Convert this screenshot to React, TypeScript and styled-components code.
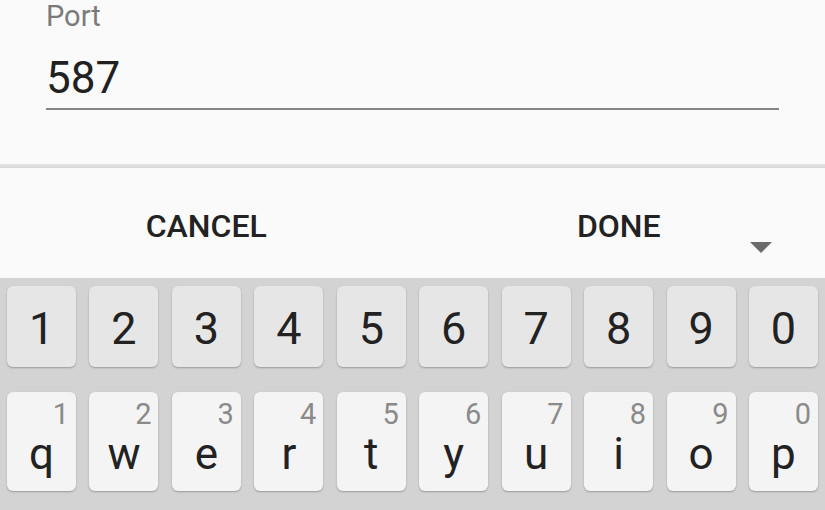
import React from "react";
import styled, { createGlobalStyle } from "styled-components";

const GlobalStyle = createGlobalStyle`
  html, body {
    margin: 0;
    padding: 0;
    background: #fafafa;
  }
  body {
    font-family: Roboto, "Noto Sans", sans-serif;
  }
`;

const Screen = styled.div`
  width: 825px;
  height: 510px;
  display: flex;
  flex-direction: column;
  overflow: hidden;
  background: #fafafa;
`;

const FieldArea = styled.div`
  height: 164px;
  padding: 1px 46px 0 46px;
  box-sizing: border-box;
  display: flex;
  flex-direction: column;
`;

const Label = styled.div`
  font-size: 29px;
  line-height: 30px;
  color: #7a7a7a;
`;

const Input = styled.div`
  margin-top: 21px;
  font-size: 44px;
  line-height: 52px;
  color: #212121;
  padding-bottom: 4px;
  border-bottom: 2px solid #858585;
`;

const Divider = styled.div`
  height: 4px;
  background: linear-gradient(#e4e4e4, #d6d6d6);
`;

const ButtonBar = styled.div`
  position: relative;
  height: 110px;
  display: flex;
`;

const BarButton = styled.div`
  flex: 1;
  display: flex;
  align-items: center;
  justify-content: center;
  padding-top: 6px;
  font-size: 32px;
  font-weight: 500;
  color: #222;
`;

const HideArrow = styled.div`
  position: absolute;
  left: 750px;
  top: 74px;
  width: 0;
  height: 0;
  border-left: 11px solid transparent;
  border-right: 11px solid transparent;
  border-top: 11px solid #6b6b6b;
`;

const Keyboard = styled.div`
  flex: 1;
  background: #d3d3d3;
  padding: 8px 7px 0 7px;
  display: flex;
  flex-direction: column;
  gap: 25px;
`;

const KeyRow = styled.div<{ $h: number }>`
  display: grid;
  grid-template-columns: repeat(10, 1fr);
  column-gap: 13.4px;
  height: ${(p) => p.$h}px;
`;

const Key = styled.div<{ $light?: boolean }>`
  position: relative;
  border-radius: 6px;
  background: ${(p) => (p.$light ? "#f4f4f4" : "#e6e6e6")};
  box-shadow: 0 1px 2px rgba(0, 0, 0, 0.28);
  display: flex;
  flex-direction: column;
  color: #222;
`;

const DigitLabel = styled.div`
  flex: 1;
  display: flex;
  align-items: center;
  justify-content: center;
  padding-top: 4px;
  font-size: 45px;
`;

const Hint = styled.div`
  margin-top: 7px;
  padding-right: 7px;
  text-align: right;
  font-size: 29px;
  line-height: 30px;
  color: #8a8a8a;
`;

const Letter = styled.div`
  text-align: center;
  font-size: 44px;
  line-height: 50px;
`;

const digits = ["1", "2", "3", "4", "5", "6", "7", "8", "9", "0"];
const letters = ["q", "w", "e", "r", "t", "y", "u", "i", "o", "p"];

export default function App() {
  return (
    <Screen>
      <GlobalStyle />
      <FieldArea>
        <Label>Port</Label>
        <Input>587</Input>
      </FieldArea>
      <Divider />
      <ButtonBar>
        <BarButton>CANCEL</BarButton>
        <BarButton>DONE</BarButton>
        <HideArrow />
      </ButtonBar>
      <Keyboard>
        <KeyRow $h={81}>
          {digits.map((d) => (
            <Key key={d}>
              <DigitLabel>{d}</DigitLabel>
            </Key>
          ))}
        </KeyRow>
        <KeyRow $h={99}>
          {letters.map((l, i) => (
            <Key key={l} $light>
              <Hint>{digits[i]}</Hint>
              <Letter>{l}</Letter>
            </Key>
          ))}
        </KeyRow>
      </Keyboard>
    </Screen>
  );
}
